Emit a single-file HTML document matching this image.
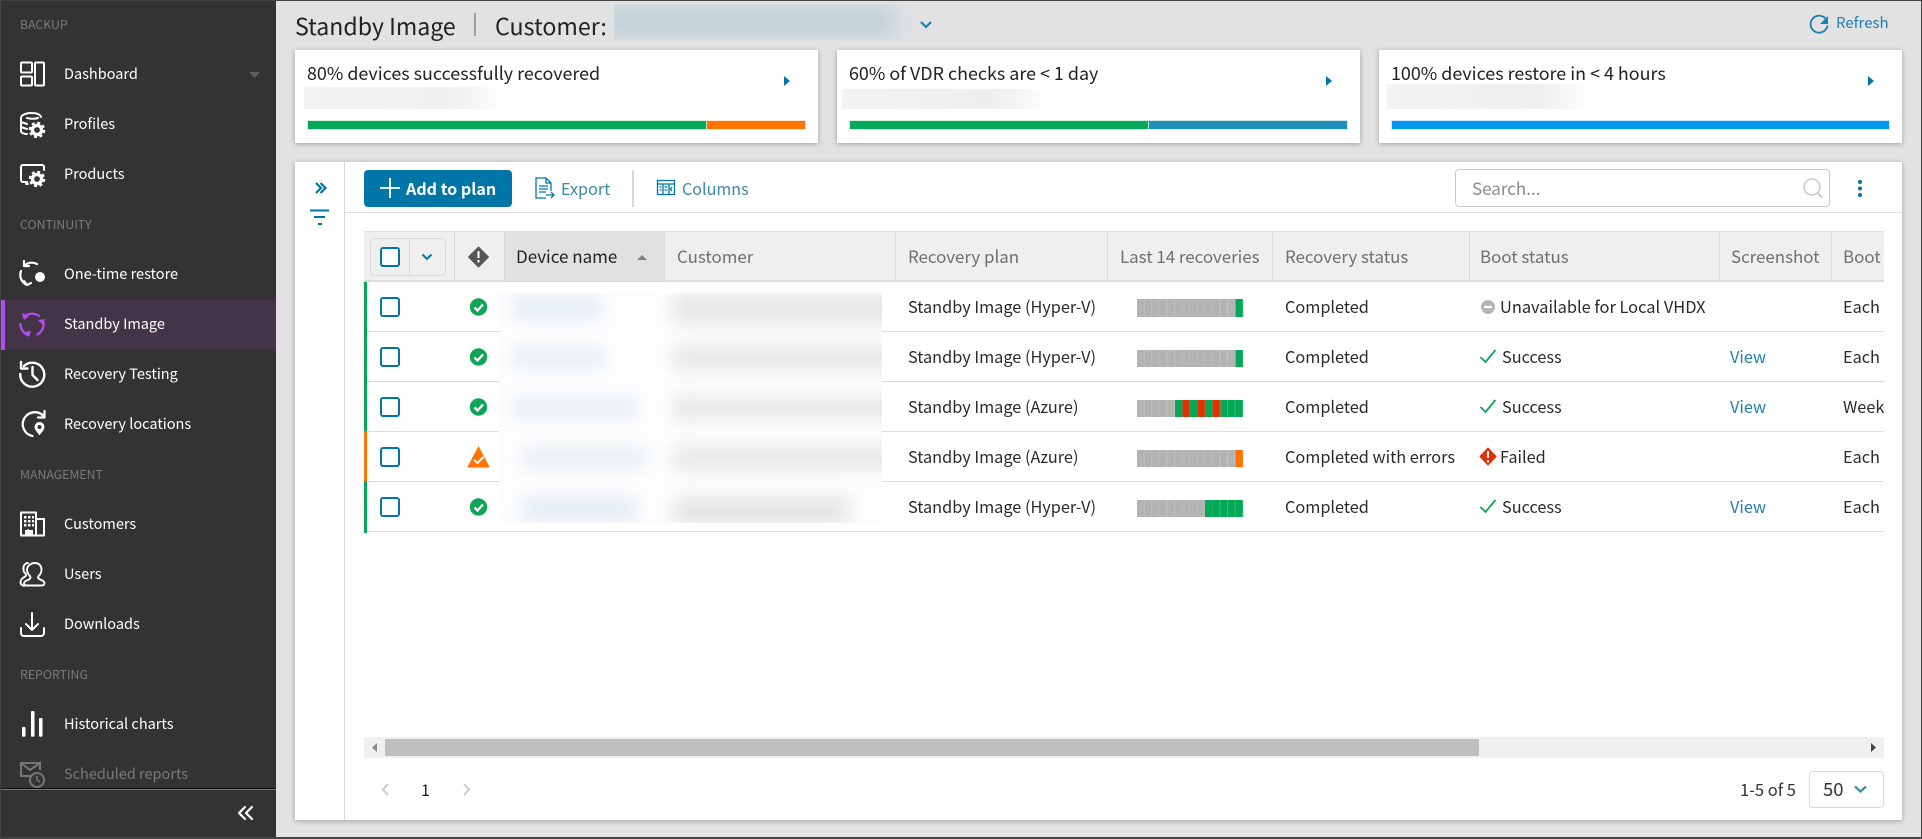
<!DOCTYPE html>
<html lang="en"><head><meta charset="utf-8"><title>Standby Image</title>
<style>
html,body{margin:0;padding:0;width:1922px;height:839px;overflow:hidden;background:#e2e2e2}
*{box-sizing:border-box}
body{font-family:"Noto Sans CJK JP","Liberation Sans",sans-serif;color:#222;position:relative}
.a,.t{position:absolute}
.t{white-space:nowrap;line-height:24px;height:24px}
.nav{color:#fff;font-size:14.5px;left:64px}
.sec{color:#7a7a7a;font-size:12.3px;left:20px}
.card{position:absolute;top:50px;height:93px;background:#fff;box-shadow:0 1px 5px rgba(0,0,0,.3)}
.ct{font-size:17.9px;color:#222}
.bar{position:absolute;top:121px;height:8px}
.bl{position:absolute;filter:blur(9px)}
.hd{font-size:16.9px;color:#6f6f6f;top:244px}
.c{font-size:16.3px;color:#2a2a2a}
.ln{position:absolute;left:367px;width:1517px;height:1px;background:#ddd}
.cb{position:absolute;left:380px;width:20px;height:20px;border:2px solid #0076a8;border-radius:3px;background:#fff}
.sp{position:absolute;left:1137px;width:106px;height:17px}
.vl{position:absolute;top:232px;width:1px;height:49px;background:#d9d9d9}
</style></head><body>

<!-- sidebar -->
<div class="a" style="left:0;top:0;width:276px;height:839px;background:#333"></div>
<div class="a" style="left:1px;top:300px;width:275px;height:50px;background:#433447"></div>
<div class="a" style="left:1px;top:300px;width:4px;height:50px;background:#b44df0"></div>

<div class="t sec" style="top:12px">BACKUP</div>
<div class="t nav" style="top:62px">Dashboard</div>
<div class="t nav" style="top:112px">Profiles</div>
<div class="t nav" style="top:162px">Products</div>
<div class="t sec" style="top:212px">CONTINUITY</div>
<div class="t nav" style="top:262px">One-time restore</div>
<div class="t nav" style="top:312px">Standby Image</div>
<div class="t nav" style="top:362px">Recovery Testing</div>
<div class="t nav" style="top:412px">Recovery locations</div>
<div class="t sec" style="top:462px">MANAGEMENT</div>
<div class="t nav" style="top:512px">Customers</div>
<div class="t nav" style="top:562px">Users</div>
<div class="t nav" style="top:612px">Downloads</div>
<div class="t sec" style="top:662px">REPORTING</div>
<div class="t nav" style="top:712px">Historical charts</div>
<div class="t nav" style="top:762px;color:#7a7a7a">Scheduled reports</div>
<div class="a" style="left:0;top:789px;width:276px;height:50px;background:#333;border-top:1px solid #777"></div>
<div class="a" style="left:0;top:788px;width:276px;height:1px;background:#111"></div>

<!-- header -->
<div class="t" style="left:295px;top:10px;font-size:23.1px;line-height:30px;height:30px;color:#222">Standby Image</div>
<div class="a" style="left:474px;top:13px;width:2px;height:23px;background:#a0a0a0"></div>
<div class="t" style="left:495px;top:10px;font-size:23.2px;line-height:30px;height:30px;color:#222">Customer:</div>
<div class="a" style="left:614px;top:4px;width:300px;height:36px;overflow:hidden;background:linear-gradient(90deg,#d8dfe3 0,#d8dfe3 88%,#e0e2e3 100%)">
  <div class="bl" style="left:-10px;top:4px;width:290px;height:28px;background:#c3d1d9"></div>
</div>
<div class="t" style="left:1836px;top:11px;font-size:15px;color:#1f7fae">Refresh</div>

<!-- cards -->
<div class="card" style="left:295px;width:523px"></div>
<div class="card" style="left:837px;width:523px"></div>
<div class="card" style="left:1379px;width:523px"></div>
<div class="t ct" style="left:307px;top:61px">80% devices successfully recovered</div>
<div class="t ct" style="left:849px;top:61px">60% of VDR checks are &lt; 1 day</div>
<div class="t ct" style="left:1391px;top:61px">100% devices restore in &lt; 4 hours</div>
<div class="a" style="left:304px;top:87px;width:206px;height:22px;background:linear-gradient(90deg,#f3f3f3 0,#f0f0f0 70%,#fff 100%)"></div>
<div class="a" style="left:842px;top:89px;width:213px;height:20px;background:linear-gradient(90deg,#f3f3f3 0,#eee 70%,#fff 100%)"></div>
<div class="a" style="left:1387px;top:84px;width:205px;height:25px;background:linear-gradient(90deg,#f3f3f3 0,#efefef 75%,#fff 100%)"></div>
<div class="bar" style="left:308px;width:398px;background:#04a957;box-shadow:0 0 0 1px rgba(4,169,87,.18)"></div>
<div class="bar" style="left:707px;width:98px;background:#ff7300;box-shadow:0 0 0 1px rgba(255,115,0,.18)"></div>
<div class="bar" style="left:850px;width:298px;background:#04a957;box-shadow:0 0 0 1px rgba(4,169,87,.18)"></div>
<div class="bar" style="left:1149px;width:198px;background:#1e90b8;box-shadow:0 0 0 1px rgba(30,144,184,.18)"></div>
<div class="bar" style="left:1392px;width:497px;background:#0096eb;box-shadow:0 0 0 1px rgba(0,150,235,.18)"></div>

<!-- panel -->
<div class="a" style="left:295px;top:162px;width:1607px;height:658px;background:#fff;box-shadow:0 1px 5px rgba(0,0,0,.3)"></div>
<div class="a" style="left:344px;top:162px;width:1px;height:658px;background:#d9d9d9"></div>
<div class="a" style="left:345px;top:212px;width:1557px;height:1px;background:#ddd"></div>
<div class="a" style="left:364px;top:170px;width:148px;height:37px;background:#0076a8;border-radius:4px"></div>
<div class="t" style="left:406px;top:176px;font-size:16.1px;font-weight:700;color:#fff">Add to plan</div>
<div class="t" style="left:561px;top:176px;font-size:16.2px;color:#3e86ad">Export</div>
<div class="a" style="left:632px;top:170px;width:2px;height:37px;background:#d9d9d9"></div>
<div class="t" style="left:682px;top:176px;font-size:16.1px;color:#3e86ad">Columns</div>
<div class="a" style="left:1455px;top:169px;width:375px;height:38px;border:1px solid #ccc;border-radius:4px;background:#fff"></div>
<div class="t" style="left:1472px;top:176px;font-size:17px;color:#8a8a8a">Search...</div>

<!-- table header -->
<div class="a" style="left:364px;top:231px;width:1520px;height:51px;background:#efefef;border-top:1px solid #ddd;border-bottom:2px solid #ddd"></div>
<div class="a" style="left:504px;top:232px;width:160px;height:49px;background:#e1e1e1"></div>
<div class="vl" style="left:454px"></div><div class="vl" style="left:504px"></div><div class="vl" style="left:664px"></div><div class="vl" style="left:895px"></div><div class="vl" style="left:1107px"></div><div class="vl" style="left:1272px"></div><div class="vl" style="left:1469px"></div><div class="vl" style="left:1719px"></div><div class="vl" style="left:1831px"></div>
<div class="a" style="left:370px;top:238px;width:76px;height:38px;border:1px solid #d9d9d9;border-radius:4px"></div>
<div class="a" style="left:409px;top:238px;width:1px;height:38px;background:#d9d9d9"></div>
<div class="cb" style="top:247px"></div>
<div class="t" style="left:516px;top:244px;font-size:17px;color:#222">Device name</div>
<div class="t hd" style="left:677px">Customer</div>
<div class="t hd" style="left:908px">Recovery plan</div>
<div class="t hd" style="left:1120px">Last 14 recoveries</div>
<div class="t hd" style="left:1285px">Recovery status</div>
<div class="t hd" style="left:1480px">Boot status</div>
<div class="t hd" style="left:1731px">Screenshot</div>
<div class="a" style="left:1843px;top:232px;width:41px;height:49px;overflow:hidden"><div class="t hd" style="left:0;top:12px">Boot</div></div>

<!-- rows -->
<div class="ln" style="top:331px"></div><div class="ln" style="top:381px"></div><div class="ln" style="top:431px"></div><div class="ln" style="top:481px"></div><div class="ln" style="top:531px"></div>
<div class="a" style="left:364px;top:282px;width:3px;height:150px;background:#04a957"></div>
<div class="a" style="left:364px;top:431px;width:3px;height:50px;background:#ff7300"></div>
<div class="a" style="left:364px;top:481px;width:3px;height:52px;background:#04a957"></div>
<div class="cb" style="top:297px"></div><div class="cb" style="top:347px"></div><div class="cb" style="top:397px"></div><div class="cb" style="top:447px"></div><div class="cb" style="top:497px"></div>

<div class="a" style="left:499px;top:293px;width:383px;height:230px;overflow:hidden;background:#fdfdfe">
  <div class="bl" style="left:12px;top:4px;width:92px;height:22px;background:#e4edf3"></div>
  <div class="bl" style="left:12px;top:55px;width:94px;height:20px;background:#e6eef3"></div>
  <div class="bl" style="left:12px;top:105px;width:126px;height:20px;background:#e6eef3"></div>
  <div class="bl" style="left:22px;top:155px;width:126px;height:20px;background:#e7eef3"></div>
  <div class="bl" style="left:22px;top:204px;width:116px;height:26px;background:#e4edf3"></div>
  <div class="bl" style="left:174px;top:2px;width:240px;height:28px;background:#e4e4e4"></div>
  <div class="bl" style="left:174px;top:54px;width:240px;height:22px;background:#e5e5e5"></div>
  <div class="bl" style="left:174px;top:104px;width:240px;height:22px;background:#e6e6e6"></div>
  <div class="bl" style="left:174px;top:154px;width:240px;height:22px;background:#e6e6e6"></div>
  <div class="bl" style="left:174px;top:204px;width:176px;height:28px;background:#e4e4e4"></div>
</div>

<div class="t c" style="left:908px;top:294px">Standby Image (Hyper-V)</div>
<div class="t c" style="left:908px;top:344px">Standby Image (Hyper-V)</div>
<div class="t c" style="left:908px;top:394px">Standby Image (Azure)</div>
<div class="t c" style="left:908px;top:444px">Standby Image (Azure)</div>
<div class="t c" style="left:908px;top:494px">Standby Image (Hyper-V)</div>

<div class="sp" style="top:299px;height:18px;background:repeating-linear-gradient(90deg,transparent 0 6.9px,rgba(255,255,255,.2) 6.9px 7.57px),linear-gradient(90deg,#b3b3b3 0 92.86%,#04a957 92.86%)"></div>
<div class="sp" style="top:350px;background:repeating-linear-gradient(90deg,transparent 0 6.9px,rgba(255,255,255,.2) 6.9px 7.57px),linear-gradient(90deg,#b3b3b3 0 92.86%,#04a957 92.86%)"></div>
<div class="sp" style="top:400px;background:repeating-linear-gradient(90deg,transparent 0 6.9px,rgba(255,255,255,.2) 6.9px 7.57px),linear-gradient(90deg,#b3b3b3 0 35.71%,#04a957 35.71% 42.86%,#e33000 42.86% 50%,#04a957 50% 57.14%,#e33000 57.14% 64.29%,#04a957 64.29% 71.43%,#e33000 71.43% 78.57%,#04a957 78.57%)"></div>
<div class="sp" style="top:450px;background:repeating-linear-gradient(90deg,transparent 0 6.9px,rgba(255,255,255,.2) 6.9px 7.57px),linear-gradient(90deg,#b3b3b3 0 92.86%,#ff7300 92.86%)"></div>
<div class="sp" style="top:500px;background:repeating-linear-gradient(90deg,transparent 0 6.9px,rgba(255,255,255,.2) 6.9px 7.57px),linear-gradient(90deg,#b3b3b3 0 64.29%,#04a957 64.29%)"></div>

<div class="t c" style="left:1285px;top:294px">Completed</div>
<div class="t c" style="left:1285px;top:344px">Completed</div>
<div class="t c" style="left:1285px;top:394px">Completed</div>
<div class="t c" style="left:1285px;top:444px">Completed with errors</div>
<div class="t c" style="left:1285px;top:494px">Completed</div>

<div class="t c" style="left:1500px;top:294px;font-size:16.4px">Unavailable for Local VHDX</div>
<div class="t c" style="left:1502px;top:344px">Success</div>
<div class="t c" style="left:1502px;top:394px">Success</div>
<div class="t c" style="left:1500px;top:444px">Failed</div>
<div class="t c" style="left:1502px;top:494px">Success</div>

<div class="t c" style="left:1730px;top:344px;color:#1f7fae">View</div>
<div class="t c" style="left:1730px;top:394px;color:#1f7fae">View</div>
<div class="t c" style="left:1730px;top:494px;color:#1f7fae">View</div>

<div class="a" style="left:1843px;top:282px;width:41px;height:250px;overflow:hidden">
  <div class="t c" style="left:0;top:12px">Each r</div>
  <div class="t c" style="left:0;top:62px">Each r</div>
  <div class="t c" style="left:0;top:112px">Weekly</div>
  <div class="t c" style="left:0;top:162px">Each r</div>
  <div class="t c" style="left:0;top:212px">Each r</div>
</div>

<!-- scrollbar + pagination -->
<div class="a" style="left:364px;top:737px;width:1520px;height:21px;background:#f0f0f0"></div>
<div class="a" style="left:385px;top:739px;width:1094px;height:17px;background:#bfbfbf"></div>
<div class="t" style="left:421px;top:777px;font-size:16px;color:#222">1</div>
<div class="t" style="left:1740px;top:777px;font-size:16.5px;color:#333">1-5 of 5</div>
<div class="a" style="left:1809px;top:771px;width:75px;height:37px;border:1px solid #d9d9d9;border-radius:4px"></div>
<div class="t" style="left:1823px;top:777px;font-size:18.5px;color:#333">50</div>

<!-- icons, all in page coordinates -->
<svg class="a" style="left:0;top:0" width="1922" height="839" viewBox="0 0 1922 839" fill="none">
<defs>
<g id="gear"><circle r="4.6" stroke="#fff" stroke-width="3.4"/><circle r="7" stroke="#fff" stroke-width="2.6" stroke-dasharray="2.9 2.6"/></g>
</defs>
<g stroke="#fff" stroke-width="2" stroke-linecap="round" stroke-linejoin="round">
 <rect x="21" y="62.5" width="11" height="10" rx="1"/><rect x="21" y="76.5" width="11" height="9" rx="1"/><rect x="35" y="62.5" width="9" height="23" rx="1"/>
 <path d="M21 118c0-3 5-5 10-5s9 1 10 4M21 118v13c0 2 3 3 6 3M21 122l6 2M21 127l6 2M27 118c4 1 8 1 11 0"/>
 <path d="M44 170v-3a2 2 0 0 0-2-2H23a2 2 0 0 0-2 2v13a2 2 0 0 0 2 2h4M26 184h2"/>
 <path d="M25 265a11 11 0 0 1 12-1M21 271a11 11 0 0 0 6 14M24 261v5h5M24 281l3 4 4-2" stroke-width="2.2"/>
 <path d="M24 366a12 12 0 1 1-3.700 8M21 362v6.500h6.500M32.500 367v8l5 5" stroke-width="2.400"/>
 <path d="M43.500 416a12 12 0 1 0-11 20M44.500 411v6.500H38" stroke-width="2.300"/>
 <path d="M21 512.500h15v23H21zM36 519h8v16.500h-8M28 535v-5"/>
 <path d="M35 563c4 0 6.500 3 6.500 6.500 0 3-1 5-3 6.500-1 2 0 3 3 4 2 1 3 2 3 3.500 0 1-1 2-3 2H27c-1.500 0-3-.5-3-2 0-1.500 2-3 4-3.500 2-1 3-2 2-4-2-2-3-4-3-6.500 0-3.500 4-6.500 8-6.500M28 563c-3 0-5 3-4.500 6 0 2 1 4 2.500 5 .5 1.500 0 2-1.500 3-2 1-4 3-4 5 0 2 1.500 3.500 3.500 4" stroke-width="1.900"/>
 <path d="M32 613v17M26 624l6 6 6-6M21 628v5a3 3 0 0 0 3 3h17a3 3 0 0 0 3-3v-5"/>
</g>
<use href="#gear" x="37" y="130"/><use href="#gear" x="37" y="179"/>
<circle cx="40" cy="277" r="5" fill="#fff"/>
<path d="M39.500 421.500a5.500 5.500 0 0 1 5.500 5.500c0 3-3 6-5.500 9-2.500-3-5.500-6-5.500-9a5.500 5.500 0 0 1 5.500-5.500z" fill="#fff" stroke="#333"/><circle cx="39.500" cy="427" r="2" fill="#333"/>
<g fill="#fff"><rect x="24" y="516" width="2.500" height="2.500"/><rect x="28" y="516" width="2.500" height="2.500"/><rect x="32" y="516" width="2" height="2.500"/><rect x="24" y="520" width="2.500" height="2.500"/><rect x="28" y="520" width="2.500" height="2.500"/><rect x="32" y="520" width="2" height="2.500"/><rect x="24" y="524" width="2.500" height="2.500"/><rect x="28" y="524" width="2.500" height="2.500"/><rect x="32" y="524" width="2" height="2.500"/><rect x="25" y="530" width="8" height="5"/></g>
<rect x="22" y="727" width="3.500" height="9.700" rx="1" fill="#fff"/><rect x="31" y="711" width="3.500" height="25.700" rx="1" fill="#fff"/><rect x="39" y="718" width="3.500" height="18.700" rx="1" fill="#fff"/>
<g stroke="#b44df0" stroke-width="2.200" stroke-linecap="round"><path d="M24 317a11.500 11.500 0 0 1 15-1"/><path d="M43.500 323a11.500 11.500 0 0 1-6 11.500"/><path d="M28 335a11.500 11.500 0 0 1-7.500-11"/></g>
<g fill="#b44df0"><path d="M22 313l7 3-5 4z"/><path d="M38 320l7-1-2 6zM24 332l7-1-2 6z"/></g>
<g stroke="#777" stroke-width="2"><path d="M40 763H21v13h10M21 763l9 7 10-7v7"/></g><circle cx="37" cy="780" r="7" stroke="#777" stroke-width="2"/><path d="M37 776v4l3 2" stroke="#777" stroke-width="1.500"/>
<path d="M249 72h11l-5.500 6z" fill="#5f5f5f"/>
<path d="M245 807l-6 6 6 6M252 807l-6 6 6 6" stroke="#fff" stroke-width="2.200" stroke-linecap="round" stroke-linejoin="round"/>

<path d="M921 22l5 5 5-5" stroke="#1a80b0" stroke-width="2.200"/>
<g stroke="#1a80b0" stroke-width="1.800"><path d="M1826.500 20a8.500 8.500 0 1 0 1 5.500"/></g><path d="M1828 16v8h-8z" fill="#1a80b0"/>
<path d="M784 76l6 5-6 5zM1326 76l6 5-6 5zM1868 76l6 5-6 5z" fill="#0076a8"/>

<path d="M316 183l5 5-5 5M320.500 183l5 5-5 5" stroke="#0076a8" stroke-width="2.200"/>
<path d="M310 210.500h19M314 217h11M318 224h4" stroke="#0076a8" stroke-width="2"/>
<path d="M390 178v20M380 188h20" stroke="#fff" stroke-width="1.800"/>
<g stroke="#0076a8" stroke-width="1.300"><path d="M546 198h-10v-20h10l5 5v8M546 178v5h5M539 186h9M539 189h9M539 192h7M546 195h8M551 192l3 3-3 3"/></g>
<g stroke="#0076a8" stroke-width="1.300"><rect x="657.500" y="180.500" width="17" height="14"/><path d="M657.500 184h17M663 184v10.500M669 184v10.500M659.500 187h2M659.500 190h2M664.500 187h3M664.500 190h3M672 187l-1.500 2 1.500 2"/></g>
<circle cx="1812" cy="187" r="8" stroke="#ccc" stroke-width="1.600"/><path d="M1817.500 193l5 5" stroke="#ccc" stroke-width="1.800"/>
<g fill="#0076a8"><circle cx="1860" cy="182" r="2"/><circle cx="1860" cy="188.500" r="2"/><circle cx="1860" cy="195" r="2"/></g>

<path d="M422.500 254.500l4.500 4.500 4.500-4.500" stroke="#0076a8" stroke-width="2"/>
<path d="M478.500 247l10 10-10 10-10-10z" fill="#555" stroke="#555" stroke-linejoin="round"/><path d="M478.500 251v7M478.500 260v2.500" stroke="#fff" stroke-width="2"/>
<path d="M637 260l5-5 5 5z" fill="#808080"/>

<circle cx="478.500" cy="307" r="8.700" fill="#0ea656"/><path d="M474.500 307.500l3 3 5.500-6" stroke="#fff" stroke-width="2.300"/>
<circle cx="478.500" cy="357" r="8.700" fill="#0ea656"/><path d="M474.500 357.500l3 3 5.500-6" stroke="#fff" stroke-width="2.300"/>
<circle cx="478.500" cy="407" r="8.700" fill="#0ea656"/><path d="M474.500 407.500l3 3 5.500-6" stroke="#fff" stroke-width="2.300"/>
<circle cx="478.500" cy="507" r="8.700" fill="#0ea656"/><path d="M474.500 507.500l3 3 5.500-6" stroke="#fff" stroke-width="2.300"/>
<path d="M478.500 447l10.500 20h-21z" fill="#ff7300" stroke="#ff7300" stroke-linejoin="round"/><path d="M474 460l3.500 3 6-6" stroke="#fff" stroke-width="2"/>

<circle cx="1488" cy="307" r="7" fill="#b3b3b3"/><path d="M1484 307h8" stroke="#fff" stroke-width="2.200"/>
<g stroke="#0ea656" stroke-width="1.800"><path d="M1480.500 357l5 5 10-12M1480.500 407l5 5 10-12M1480.500 507l5 5 10-12"/></g>
<path d="M1488 448l8 8.500-8 8.500-8-8.500z" fill="#e33000" stroke="#e33000" stroke-linejoin="round"/><path d="M1488 451v7M1488 460v2.500" stroke="#fff" stroke-width="2"/>

<path d="M377 743v9l-5-4.500z" fill="#8a8a8a"/><path d="M1871 743v9l5-4.500z" fill="#444"/>
<path d="M388 784l-5 5.500 5 5.500M464 784l5 5.500-5 5.500" stroke="#ccc" stroke-width="2"/>
<path d="M1855 786.500l5.500 5 5.500-5" stroke="#3a8aa8" stroke-width="2.200"/>
</svg>

<!-- outer frame -->
<div class="a" style="left:0;top:0;width:1922px;height:1px;background:#444"></div>
<div class="a" style="left:0;top:0;width:1px;height:839px;background:#444"></div>
<div class="a" style="left:1921px;top:0;width:1px;height:839px;background:#444"></div>
<div class="a" style="left:0;top:837px;width:1922px;height:2px;background:#444"></div>
</body></html>
